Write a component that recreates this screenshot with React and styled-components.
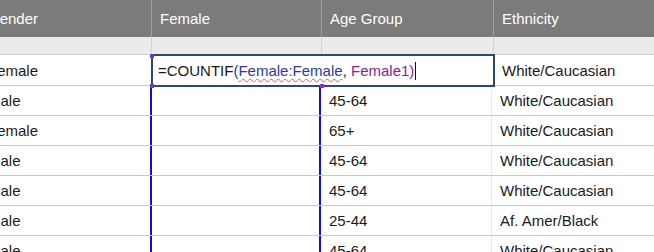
import React from "react";
import styled, { createGlobalStyle } from "styled-components";

const Global = createGlobalStyle`
  html, body {
    margin: 0;
    padding: 0;
    background: #ffffff;
    overflow: hidden;
  }
  body {
    font-family: "Liberation Sans", Arial, sans-serif;
    width: 654px;
    height: 252px;
  }
`;

const COLS = [172, 170, 172, 200];

const Sheet = styled.div`
  position: relative;
  width: 654px;
  height: 252px;
  overflow: hidden;
`;

const Grid = styled.div`
  display: flex;
  flex-direction: column;
  margin-left: -20px;
  width: ${COLS.reduce((a, b) => a + b, 0)}px;
`;

const Row = styled.div`
  display: flex;
  height: ${(p) => p.$h}px;
  box-sizing: border-box;
  border-bottom: ${(p) => (p.$line ? `1px solid ${p.$line}` : "none")};
  background: ${(p) => p.$bg || "#ffffff"};
`;

const Cell = styled.div`
  flex: 0 0 ${(p) => p.$w}px;
  box-sizing: border-box;
  display: flex;
  align-items: center;
  padding-left: 8px;
  font-size: 15px;
  color: ${(p) => p.$color || "#1a1a1a"};
  border-right: 1px solid ${(p) => p.$divider || "transparent"};
  white-space: nowrap;
  overflow: hidden;
`;

const RangeCell = styled(Cell)`
  border-left: 2px solid #0f0fcc;
  border-right: 2px solid #0f0fcc;
  margin-left: -1px;
  flex-basis: ${(p) => p.$w + 1}px;
`;

const Editor = styled.div`
  position: absolute;
  left: 151px;
  top: 54px;
  width: 344px;
  height: 33px;
  box-sizing: border-box;
  border: 2px solid #2c4a68;
  background: #ffffff;
  display: flex;
  align-items: center;
  padding-left: 5px;
  font-size: 15px;
  color: #1a1a1a;
  white-space: pre;
`;

const Ref = styled.span`
  color: ${(p) => p.$color};
  text-decoration: ${(p) => (p.$wavy ? "underline wavy #e05a5a" : "none")};
  text-decoration-thickness: 1px;
  text-underline-offset: 2px;
`;

const Caret = styled.span`
  display: inline-block;
  width: 1px;
  height: 18px;
  background: #111111;
  margin-left: 1px;
`;

const Handle = styled.div`
  position: absolute;
  left: ${(p) => p.$x}px;
  top: ${(p) => p.$y}px;
  width: 4px;
  height: 4px;
  background: #8a2be2;
`;

const rows = [
  ["Male", "45-64", "White/Caucasian"],
  ["Female", "65+", "White/Caucasian"],
  ["Male", "45-64", "White/Caucasian"],
  ["Male", "45-64", "White/Caucasian"],
  ["Male", "25-44", "Af. Amer/Black"],
  ["Male", "45-64", "White/Caucasian"],
];

export default function App() {
  return (
    <Sheet>
      <Global />
      <Grid>
        <Row $h={37} $bg="#7b7b7b">
          {["Gender", "Female", "Age Group", "Ethnicity"].map((t, i) => (
            <Cell key={t} $w={COLS[i]} $color="#ffffff" $divider="#a0a0a0">
              {t}
            </Cell>
          ))}
        </Row>
        <Row $h={18} $bg="#ebebeb" $line="#cfcfcf">
          {COLS.map((w, i) => (
            <Cell key={i} $w={w} $divider="#d4d4d4" />
          ))}
        </Row>
        <Row $h={31} $line="#c9c9c9">
          <Cell $w={COLS[0]} $divider="#e4e4e4">Female</Cell>
          <Cell $w={COLS[1]} $divider="#e4e4e4" />
          <Cell $w={COLS[2]} $divider="#e4e4e4" />
          <Cell $w={COLS[3]}>White/Caucasian</Cell>
        </Row>
        {rows.map(([g, age, eth], i) => (
          <Row key={i} $h={30} $line="#c9c9c9">
            <Cell $w={COLS[0] - 1}>{g}</Cell>
            <RangeCell $w={COLS[1]} />
            <Cell $w={COLS[2] - 1} $divider="#e8e8e8">{age}</Cell>
            <Cell $w={COLS[3]}>{eth}</Cell>
          </Row>
        ))}
      </Grid>
      <Editor>
        =COUNTIF
        <Ref $color="#2a3aa8">(</Ref>
        <Ref $color="#2a3aa8" $wavy>Female:Female</Ref>
        , <Ref $color="#8e1a9c">Female1)</Ref>
        <Caret />
      </Editor>
      <Handle $x={150} $y={54} />
      <Handle $x={150} $y={84} />
      <Handle $x={320} $y={84} />
    </Sheet>
  );
}
